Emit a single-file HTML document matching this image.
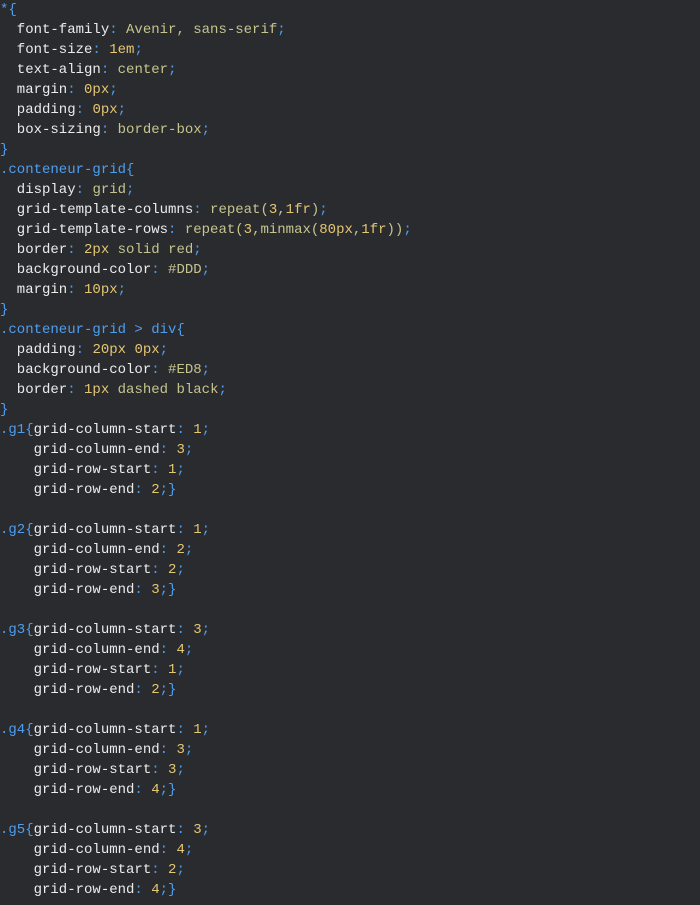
<!DOCTYPE html>
<html><head><meta charset="utf-8"><style>
body{margin:0;background:#2a2b2f;width:700px;height:905px;overflow:hidden}
pre{margin:0;padding:0;font-family:"Liberation Mono",monospace;font-size:14px;line-height:20px;color:#ececec;white-space:pre}
.b{color:#4e9ef0}.v{color:#c6c58d}.n{color:#e4c772}
</style></head><body><pre><span class="b">*{</span>
  font-family<span class="b">:</span> <span class="v">Avenir, sans-serif</span><span class="b">;</span>
  font-size<span class="b">:</span> <span class="n">1em</span><span class="b">;</span>
  text-align<span class="b">:</span> <span class="v">center</span><span class="b">;</span>
  margin<span class="b">:</span> <span class="n">0px</span><span class="b">;</span>
  padding<span class="b">:</span> <span class="n">0px</span><span class="b">;</span>
  box-sizing<span class="b">:</span> <span class="v">border-box</span><span class="b">;</span>
<span class="b">}</span>
<span class="b">.conteneur-grid{</span>
  display<span class="b">:</span> <span class="v">grid</span><span class="b">;</span>
  grid-template-columns<span class="b">:</span> <span class="v">repeat(</span><span class="n">3</span><span class="v">,</span><span class="n">1fr</span><span class="v">)</span><span class="b">;</span>
  grid-template-rows<span class="b">:</span> <span class="v">repeat(</span><span class="n">3</span><span class="v">,minmax(</span><span class="n">80px</span><span class="v">,</span><span class="n">1fr</span><span class="v">))</span><span class="b">;</span>
  border<span class="b">:</span> <span class="n">2px</span> <span class="v">solid red</span><span class="b">;</span>
  background-color<span class="b">:</span> <span class="v">#DDD</span><span class="b">;</span>
  margin<span class="b">:</span> <span class="n">10px</span><span class="b">;</span>
<span class="b">}</span>
<span class="b">.conteneur-grid &gt; div{</span>
  padding<span class="b">:</span> <span class="n">20px 0px</span><span class="b">;</span>
  background-color<span class="b">:</span> <span class="v">#ED8</span><span class="b">;</span>
  border<span class="b">:</span> <span class="n">1px</span> <span class="v">dashed black</span><span class="b">;</span>
<span class="b">}</span>
<span class="b">.g1{</span>grid-column-start<span class="b">:</span> <span class="n">1</span><span class="b">;</span>
    grid-column-end<span class="b">:</span> <span class="n">3</span><span class="b">;</span>
    grid-row-start<span class="b">:</span> <span class="n">1</span><span class="b">;</span>
    grid-row-end<span class="b">:</span> <span class="n">2</span><span class="b">;}</span>

<span class="b">.g2{</span>grid-column-start<span class="b">:</span> <span class="n">1</span><span class="b">;</span>
    grid-column-end<span class="b">:</span> <span class="n">2</span><span class="b">;</span>
    grid-row-start<span class="b">:</span> <span class="n">2</span><span class="b">;</span>
    grid-row-end<span class="b">:</span> <span class="n">3</span><span class="b">;}</span>

<span class="b">.g3{</span>grid-column-start<span class="b">:</span> <span class="n">3</span><span class="b">;</span>
    grid-column-end<span class="b">:</span> <span class="n">4</span><span class="b">;</span>
    grid-row-start<span class="b">:</span> <span class="n">1</span><span class="b">;</span>
    grid-row-end<span class="b">:</span> <span class="n">2</span><span class="b">;}</span>

<span class="b">.g4{</span>grid-column-start<span class="b">:</span> <span class="n">1</span><span class="b">;</span>
    grid-column-end<span class="b">:</span> <span class="n">3</span><span class="b">;</span>
    grid-row-start<span class="b">:</span> <span class="n">3</span><span class="b">;</span>
    grid-row-end<span class="b">:</span> <span class="n">4</span><span class="b">;}</span>

<span class="b">.g5{</span>grid-column-start<span class="b">:</span> <span class="n">3</span><span class="b">;</span>
    grid-column-end<span class="b">:</span> <span class="n">4</span><span class="b">;</span>
    grid-row-start<span class="b">:</span> <span class="n">2</span><span class="b">;</span>
    grid-row-end<span class="b">:</span> <span class="n">4</span><span class="b">;}</span>
</pre></body></html>
